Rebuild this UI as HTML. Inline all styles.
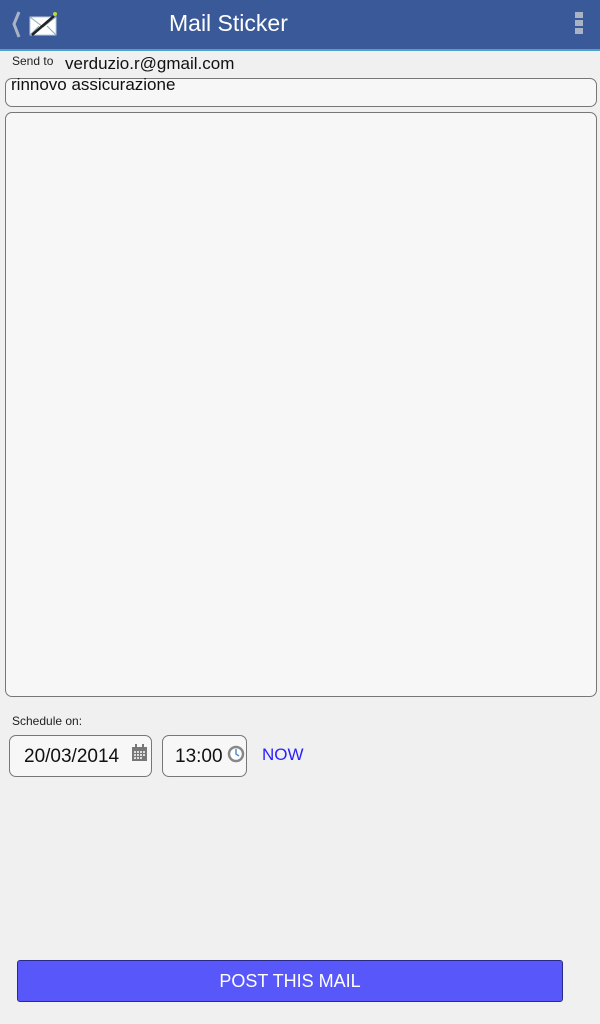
<!DOCTYPE html>
<html><head><style>
body{margin:0;width:600px;height:1024px;background:#f0f0f0;font-family:"Liberation Sans",sans-serif;position:relative;overflow:hidden}
.bar{position:absolute;left:0;top:0;width:600px;height:49px;background:#3a5998;border-bottom:2px solid #4fa3c9}
.title{position:absolute;left:169px;top:10px;color:#fff;font-size:23px}
.box{position:absolute;background:#f7f7f7;border:1px solid #777;border-radius:7px;box-sizing:border-box}
.abs{position:absolute}
</style></head><body>
<div class="bar">
<svg class="abs" style="left:10px;top:10px" width="50" height="30">
<path d="M9 2 L4 14 L9 27" stroke="#aab3c6" stroke-width="3" fill="none"/>
<rect x="20" y="7" width="26" height="18" fill="#fff" stroke="#bcd" />
<path d="M20 7 L33 17 L46 7 M20 25 L29 16 M46 25 L37 16" stroke="#8ab" fill="none"/>
<path d="M22 25 L44 6" stroke="#222" stroke-width="2.5"/>
<circle cx="45" cy="4" r="2" fill="#bd3"/>
</svg>
<div class="title">Mail Sticker</div>
<div class="abs" style="left:575px;top:12px;width:8px;height:23px;background:repeating-linear-gradient(#aab3c6 0 6px,transparent 6px 8px)"></div>
</div>
<div class="abs" style="left:12px;top:54px;font-size:12px;color:#222">Send to</div>
<div class="abs" style="left:65px;top:54px;font-size:17px;color:#111">verduzio.r@gmail.com</div>
<div class="box" style="left:5px;top:78px;width:592px;height:29px"><div class="abs" style="left:5px;top:-4px;font-size:17px;color:#111">rinnovo assicurazione</div></div>
<div class="box" style="left:5px;top:112px;width:592px;height:585px;border-width:1.5px"></div>
<div class="abs" style="left:12px;top:714px;font-size:12px;color:#222">Schedule on:</div>
<div class="box" style="left:9px;top:735px;width:143px;height:42px"><div class="abs" style="left:14px;top:10px;font-size:19px;color:#111">20/03/2014</div>
<svg class="abs" style="left:121px;top:8px" width="17" height="18"><rect x="1" y="3" width="15" height="14" fill="#777"/><g fill="#ddd"><rect x="3" y="7" width="2" height="2"/><rect x="6" y="7" width="2" height="2"/><rect x="9" y="7" width="2" height="2"/><rect x="12" y="7" width="2" height="2"/><rect x="3" y="10" width="2" height="2"/><rect x="6" y="10" width="2" height="2"/><rect x="9" y="10" width="2" height="2"/><rect x="12" y="10" width="2" height="2"/><rect x="3" y="13" width="2" height="2"/><rect x="6" y="13" width="2" height="2"/><rect x="9" y="13" width="2" height="2"/></g><rect x="4" y="0" width="2" height="4" fill="#777"/><rect x="11" y="0" width="2" height="4" fill="#777"/></svg></div>
<div class="box" style="left:162px;top:735px;width:85px;height:42px"><div class="abs" style="left:12px;top:10px;font-size:19px;color:#111">13:00</div>
<svg class="abs" style="left:64px;top:9px" width="18" height="18"><circle cx="9" cy="9" r="7" fill="#fff" stroke="#888" stroke-width="2.5"/><path d="M9 4 V9 L12 11" stroke="#4a90d9" stroke-width="1.5" fill="none"/></svg></div>
<div class="abs" style="left:262px;top:745px;font-size:17px;color:#2a1fff">NOW</div>
<div class="abs" style="left:17px;top:960px;width:546px;height:42px;background:#5757fa;border:1px solid #2a2a8a;border-radius:3px;box-sizing:border-box;color:#fff;font-size:18px;text-align:center;line-height:40px">POST THIS MAIL</div>
</body></html>
